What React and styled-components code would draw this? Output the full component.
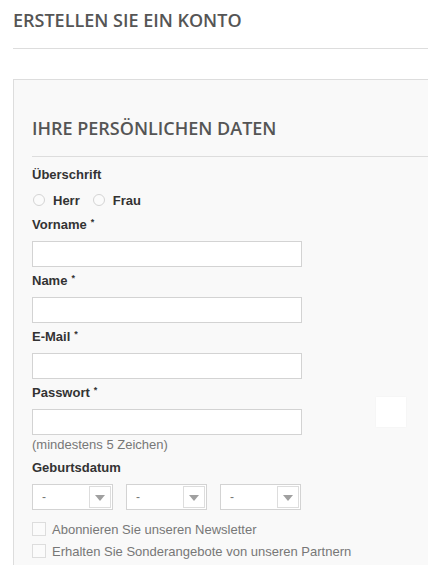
import React from "react";
import styled, { createGlobalStyle } from "styled-components";

const GlobalStyle = createGlobalStyle`
  html, body {
    margin: 0;
    padding: 0;
    background: #fff;
  }
  body {
    font-family: "Liberation Sans", Arial, sans-serif;
    overflow: hidden;
  }
`;

const Page = styled.div`
  width: 428px;
  overflow: hidden;
  padding: 0 0 0 13px;
  box-sizing: border-box;
`;

const PageTitle = styled.h1`
  font-family: "Open Sans", sans-serif;
  font-weight: 600;
  font-size: 18px;
  line-height: 24px;
  color: #555;
  text-transform: uppercase;
  margin: 0;
  padding: 8px 0 16px;
  border-bottom: 1px solid #ddd;
`;

const Panel = styled.div`
  position: relative;
  margin-top: 30px;
  width: 460px;
  background: #f9f9f9;
  border: 1px solid #ddd;
  padding: 27px 0 20px 18px;
`;

const PanelTitle = styled.h2`
  font-family: "Open Sans", sans-serif;
  font-weight: 600;
  font-size: 18px;
  line-height: 24px;
  color: #555;
  text-transform: uppercase;
  margin: 0;
  padding: 9px 0 16px;
  border-bottom: 1px solid #ddd;
`;

const Form = styled.div`
  display: flex;
  flex-direction: column;
  padding-top: 9px;
`;

const Label = styled.div`
  font-size: 13px;
  font-weight: bold;
  line-height: 18px;
  color: #333;
  margin: ${(p) => (p.$first ? "0" : "5px")} 0 7px;
`;

const Req = styled.sup`
  font-size: 9px;
  vertical-align: top;
  position: relative;
  top: -3px;
  margin-left: 4px;
`;

const RadioRow = styled.div`
  display: flex;
  align-items: center;
  height: 18px;
  margin-bottom: 7px;
`;

const RadioOption = styled.label`
  display: flex;
  align-items: center;
  font-size: 13px;
  font-weight: bold;
  color: #333;
  margin-right: 12px;
`;

const RadioDot = styled.span`
  width: 10px;
  height: 10px;
  border-radius: 50%;
  border: 1px solid #d4d4d4;
  background: #fbfbfb;
  margin: 0 8px 0 1px;
`;

const Input = styled.div`
  width: 270px;
  height: 26px;
  box-sizing: border-box;
  background: #fff;
  border: 1px solid #d3d3d3;
`;

const Hint = styled.div`
  font-size: 13px;
  line-height: 18px;
  color: #777;
  margin-top: 1px;
`;

const SelectRow = styled.div`
  display: flex;
  gap: 13px;
`;

const SelectBox = styled.div`
  width: 81px;
  height: 26px;
  box-sizing: border-box;
  background: #fff;
  border: 1px solid #d3d3d3;
  display: flex;
  align-items: center;
  justify-content: space-between;
  padding: 1px 1px 1px 9px;
  font-size: 12px;
  color: #777;
`;

const ArrowBox = styled.span`
  width: 22px;
  height: 22px;
  box-sizing: border-box;
  border: 1px solid #ddd;
  background: #fff;
  display: flex;
  align-items: center;
  justify-content: center;
  &::after {
    content: "";
    border-left: 5px solid transparent;
    border-right: 5px solid transparent;
    border-top: 6px solid #a0a0a0;
    margin-top: 1px;
  }
`;

const CheckList = styled.div`
  display: flex;
  flex-direction: column;
  gap: 4px;
  margin-top: 10px;
`;

const CheckRow = styled.label`
  display: flex;
  align-items: center;
  height: 18px;
  font-size: 13px;
  color: #777;
`;

const CheckBox = styled.span`
  width: 14px;
  height: 14px;
  box-sizing: border-box;
  border: 1px solid #ddd;
  background: #fbfbfb;
  margin-right: 6px;
`;

const FloatBox = styled.div`
  position: absolute;
  left: 362px;
  top: 317px;
  width: 30px;
  height: 30px;
  background: #fff;
  box-shadow: 0 0 2px rgba(0, 0, 0, 0.04);
`;

const fields = [
  { label: "Vorname", req: true },
  { label: "Name", req: true },
  { label: "E-Mail", req: true },
  { label: "Passwort", req: true, hint: "(mindestens 5 Zeichen)" },
];

export default function App() {
  return (
    <>
      <GlobalStyle />
      <Page>
        <PageTitle>Erstellen Sie ein Konto</PageTitle>
        <Panel>
          <PanelTitle>Ihre persönlichen Daten</PanelTitle>
          <Form>
            <Label $first>Überschrift</Label>
            <RadioRow>
              <RadioOption>
                <RadioDot />
                Herr
              </RadioOption>
              <RadioOption>
                <RadioDot />
                Frau
              </RadioOption>
            </RadioRow>
            {fields.map((f, i) => (
              <React.Fragment key={f.label}>
                <Label $first={i === 0}>
                  {f.label}
                  {f.req && <Req>*</Req>}
                </Label>
                <Input />
                {f.hint && <Hint>{f.hint}</Hint>}
              </React.Fragment>
            ))}
            <Label>Geburtsdatum</Label>
            <SelectRow>
              {[0, 1, 2].map((k) => (
                <SelectBox key={k}>
                  -
                  <ArrowBox />
                </SelectBox>
              ))}
            </SelectRow>
            <CheckList>
              <CheckRow>
                <CheckBox />
                Abonnieren Sie unseren Newsletter
              </CheckRow>
              <CheckRow>
                <CheckBox />
                Erhalten Sie Sonderangebote von unseren Partnern
              </CheckRow>
            </CheckList>
          </Form>
          <FloatBox />
        </Panel>
      </Page>
    </>
  );
}
